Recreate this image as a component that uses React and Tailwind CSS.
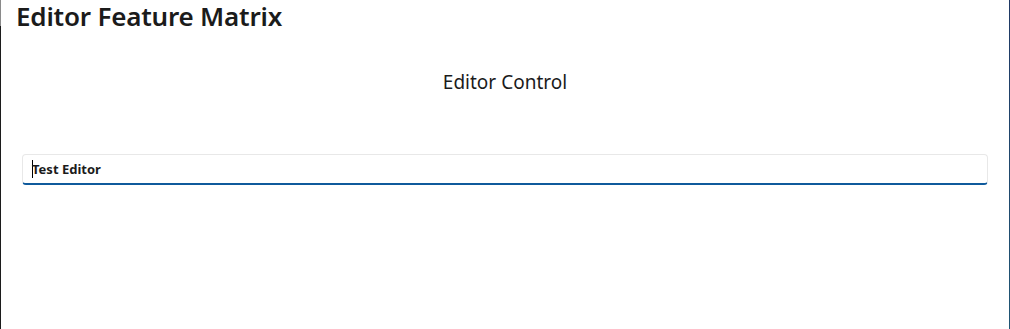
export default function App() {
  return (
    <div className="flex w-[1010px] h-[329px] bg-white overflow-hidden">
      <div className="flex flex-col w-px shrink-0">
        <div className="h-[26px] bg-[#8a8a8a]"></div>
        <div className="flex-1 bg-[#1c1c1c]"></div>
      </div>
      <div className="flex-1 flex flex-col" style={{ fontFamily: '"Noto Sans", "Open Sans", sans-serif' }}>
        <h1 className="pl-[15px] text-[26px] leading-[32px] font-semibold text-[#1b1b1b] tracking-[-0.2px]">Editor Feature Matrix</h1>
        <div className="mt-[36px] text-center text-[19px] leading-[28px] text-[#1b1b1b]">Editor Control</div>
        <div className="mx-[21px] mt-[58px] h-[31px] rounded-[4px] border border-[#e8e8e8] border-b-2 border-b-[#0f5a9c] flex items-center pl-[9px]">
          <span className="w-px h-[18px] bg-black"></span>
          <span className="text-[13px] font-bold text-[#1b1b1b] leading-[20px] -ml-px">Test Editor</span>
        </div>
      </div>
      <div className="w-px shrink-0 bg-gradient-to-b from-[#1f3864] to-[#1f5574]"></div>
    </div>
  );
}
